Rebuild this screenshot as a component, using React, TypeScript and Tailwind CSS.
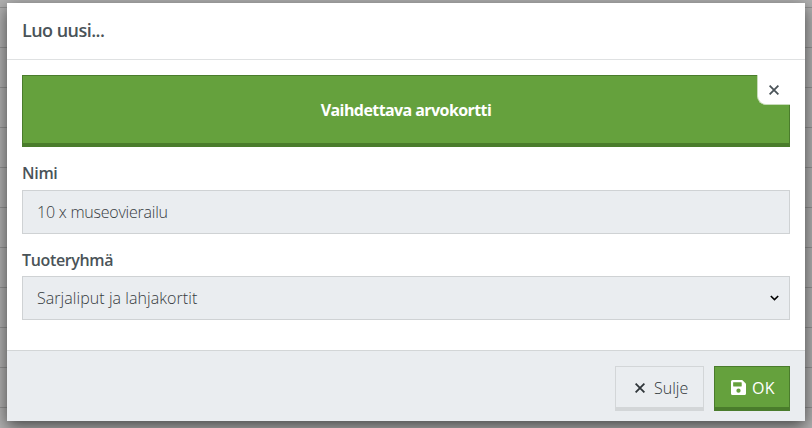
import type { ReactNode } from 'react';

const light = 'font-light text-[#363b40]';

function Label({ children, className }: { children: ReactNode; className: string }) {
  return <div className={`h-6 text-[16px] leading-6 font-semibold text-[#4a5358] whitespace-nowrap ${className}`}>{children}</div>;
}

function CrossIcon({ className }: { className: string }) {
  return (
    <svg className={className} viewBox="0 0 10 10" fill="none" stroke="currentColor" strokeWidth="1.8">
      <path d="M.6.6 9.4 9.4M9.4.6.6 9.4" />
    </svg>
  );
}

export default function App() {
  return (
    <div className="h-[428px] w-[812px] overflow-hidden bg-[#b0b0b0] bg-[repeating-linear-gradient(to_bottom,transparent_0px,transparent_7px,#929292_7px,#929292_8px,transparent_8px,transparent_40px)] pt-[3px] pl-[7px] font-['Open_Sans','Noto_Sans',sans-serif]">
      <div className="flex h-[418px] w-[798px] flex-col bg-white shadow-[0_5px_15px_rgba(0,0,0,0.6)]">
        <header className="h-[57px] shrink-0 border-b border-[#dfe1e2] px-[15px] pt-[14px]">
          <h4 className="text-[18px] leading-[26px] font-semibold tracking-[-0.55px] text-[#4a5358]">Luo uusi...</h4>
        </header>
        <main className="flex grow flex-col px-[15px] pt-[15px]">
          <div className="relative flex h-[72px] items-center justify-center border border-b-4 border-[#4a7c2c] bg-[#65a13d]">
            <span className="text-[16px] leading-6 font-bold tracking-[-0.58px] text-white">Vaihdettava arvokortti</span>
            <button className="absolute -top-px -right-px flex h-[30px] w-[33px] items-center justify-center rounded-bl-[9px] border-b border-l border-[#c8dcba] bg-white text-[#4a5358]">
              <CrossIcon className="mt-px size-[10px]" />
            </button>
          </div>
          <Label className="mt-[14px] tracking-[-0.3px]">Nimi</Label>
          <div className={`mt-[5px] flex h-[44px] items-center border border-[#cfd2d4] bg-[#eaedf0] px-[14px] text-[16px] ${light}`}>
            <span className="tracking-[-0.23px]">10 x museovierailu</span>
          </div>
          <Label className="mt-[14px] tracking-[-0.35px]">Tuoteryhmä</Label>
          <div className={`mt-[4px] flex h-[44px] items-center justify-between border border-[#cfd2d4] bg-[#eaedf0] pr-[10px] pl-[14px] text-[16px] ${light}`}>
            <span className="tracking-[0.06px]">Sarjaliput ja lahjakortit</span>
            <svg className="h-[6px] w-[9px] text-black" viewBox="0 0 9 6" fill="none" stroke="currentColor" strokeWidth="1.6">
              <path d="m.8 1 3.7 3.6L8.2 1" />
            </svg>
          </div>
        </main>
        <footer className="flex h-[71px] shrink-0 justify-end gap-[10px] border-t border-[#d3d6d7] bg-[#eaedf0] px-[15px] pt-[15px]">
          <button className="flex h-[45px] w-[89px] items-center border border-b-4 border-[#d3d6d8] pt-px pl-[19px] text-[#2f3539]">
            <CrossIcon className="size-[10px]" />
            <span className="ml-[9px] pt-px text-[16px] leading-6 font-light tracking-[0px]">Sulje</span>
          </button>
          <button className="flex h-[45px] w-[76px] items-center border border-b-4 border-[#4a7c2c] bg-[#65a13d] pt-px pl-[16px] text-white">
            <svg className="size-[15px] shrink-0" viewBox="0 0 448 448" fill="currentColor">
              <path fillRule="evenodd" d="M434 98 350 14C341 5 329 0 316 0H48C22 0 0 22 0 48v352c0 26 22 48 48 48h352c26 0 48-22 48-48V132c0-13-5-25-14-34ZM224 384a64 64 0 1 1 0-128 64 64 0 0 1 0 128ZM320 80v100c0 7-5 12-12 12H76c-7 0-12-5-12-12V76c0-7 5-12 12-12h228c10 0 16 6 16 16Z" />
            </svg>
            <span className="ml-[6px] pt-px text-[16px] leading-6 font-normal tracking-[0.4px]">OK</span>
          </button>
        </footer>
      </div>
    </div>
  );
}
